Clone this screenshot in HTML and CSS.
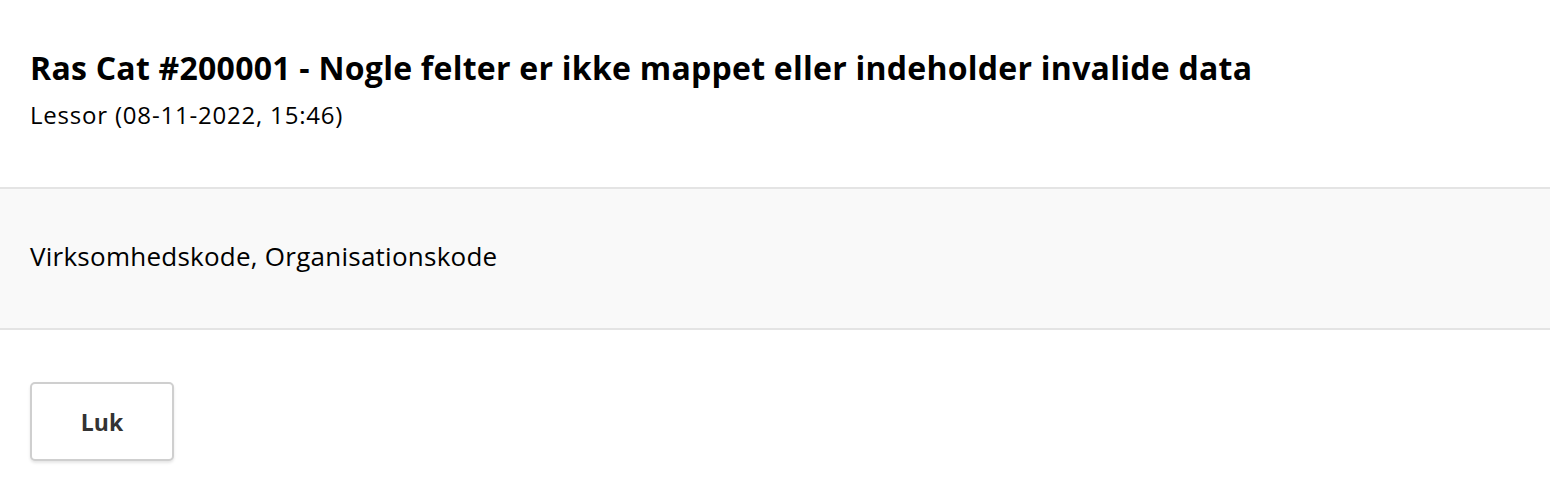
FILE: index.html
```html
<!DOCTYPE html>
<html>
<head>
<meta charset="utf-8">
<link rel="stylesheet" href="styles.css">
</head>
<body>
<div class="modal">
  <div class="modal-header">
    <h1 class="title">Ras Cat #200001 - Nogle felter er ikke mappet eller indeholder invalide data</h1>
    <div class="subtitle">Lessor (08-11-2022, 15:46)</div>
  </div>
  <div class="modal-body">
    <p class="fields">Virksomhedskode, Organisationskode</p>
  </div>
  <div class="modal-footer">
    <button class="btn">Luk</button>
  </div>
</div>
</body>
</html>
```

FILE: styles.css
```css
html, body {
  margin: 0;
  padding: 0;
  background: #fff;
}
body {
  font-family: "Open Sans", "Liberation Sans", sans-serif;
  color: #000;
}
.modal-header {
  padding: 48px 30px 0;
  height: 189px;
  box-sizing: border-box;
  border-bottom: 2px solid #e4e4e4;
}
.title {
  margin: 0;
  font-size: 32px;
  font-weight: 700;
  line-height: 40px;
  letter-spacing: 0.25px;
}
.subtitle {
  margin-top: 12px;
  font-size: 24px;
  line-height: 30px;
  letter-spacing: 0.8px;
}
.modal-body {
  background: #f9f9f9;
  height: 141px;
  box-sizing: border-box;
  padding: 0 30px 5px;
  display: flex;
  align-items: center;
  border-bottom: 2px solid #e4e4e4;
}
.fields {
  margin: 0;
  font-size: 26px;
  letter-spacing: 0.25px;
}
.modal-footer {
  padding: 52px 30px;
}
.btn {
  width: 144px;
  height: 79px;
  background: #fff;
  border: 2px solid #cfcfcf;
  border-radius: 5px;
  box-shadow: 0 2px 3px rgba(0,0,0,0.1);
  font-family: inherit;
  font-size: 23px;
  font-weight: 700;
  color: #333;
}
```
